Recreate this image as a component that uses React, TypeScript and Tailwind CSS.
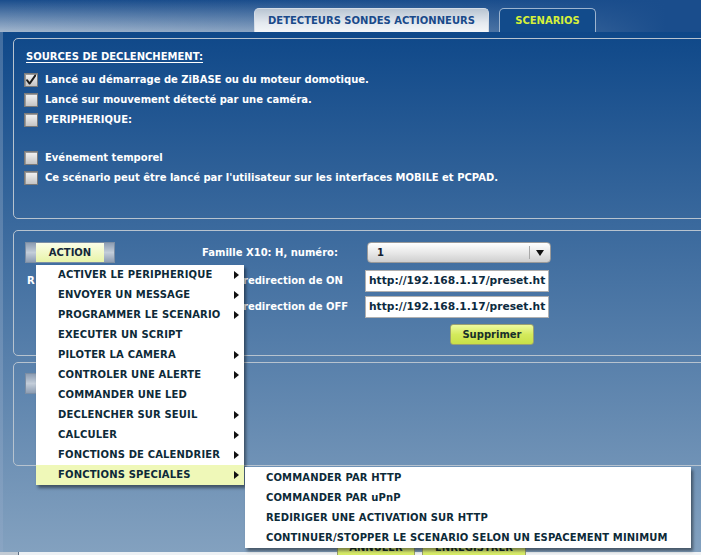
import React from 'react';

const font = "font-['DejaVu_Sans',Verdana,sans-serif] font-bold";

const Check: React.FC<{ checked?: boolean }> = ({ checked }) => (
  <span className="relative w-[14px] h-[14px] shrink-0 border border-[#7a7a7a] bg-[linear-gradient(to_bottom,#f4f4f4,#c4c4c4)] shadow-[inset_1px_1px_0_#9a9a9a]">
    {checked && (
      <svg viewBox="0 0 14 14" className="absolute -left-px -top-px w-[14px] h-[14px]">
        <path d="M3 7.2 L5.6 10.6 L11.2 2.6" fill="none" stroke="#1c1c1c" strokeWidth="1.9" strokeLinecap="round" strokeLinejoin="round" />
      </svg>
    )}
  </span>
);

const CheckRow: React.FC<{ label: string; checked?: boolean; className?: string }> = ({ label, checked, className }) => (
  <div className={`flex items-center h-[20px] gap-[7px] ${className ?? ''}`}>
    <Check checked={checked} />
    <span className="text-white">{label}</span>
  </div>
);

const ActionButton: React.FC<{ label: string }> = ({ label }) => (
  <div className="flex w-[90px] h-[21px] border border-[#7c8ea4]">
    <span className="w-[10px] bg-[linear-gradient(to_bottom,#8d9db3,#c3cdd9,#8d9db3)]" />
    <span className="flex-1 flex items-center justify-center bg-[linear-gradient(to_bottom,#fbfde8,#e8f4a8)] text-[#14283a]">{label}</span>
    <span className="w-[10px] bg-[linear-gradient(to_bottom,#8d9db3,#c3cdd9,#8d9db3)]" />
  </div>
);

const Arrow = () => (
  <svg viewBox="0 0 5 8" className="w-[5px] h-[8px]">
    <path d="M0 0 L5 4 L0 8 Z" fill="#111" />
  </svg>
);

const menuItems: { label: string; sub?: boolean }[] = [
  { label: 'ACTIVER LE PERIPHERIQUE', sub: true },
  { label: 'ENVOYER UN MESSAGE', sub: true },
  { label: 'PROGRAMMER LE SCENARIO', sub: true },
  { label: 'EXECUTER UN SCRIPT' },
  { label: 'PILOTER LA CAMERA', sub: true },
  { label: 'CONTROLER UNE ALERTE', sub: true },
  { label: 'COMMANDER UNE LED' },
  { label: 'DECLENCHER SUR SEUIL', sub: true },
  { label: 'CALCULER', sub: true },
  { label: 'FONCTIONS DE CALENDRIER', sub: true },
  { label: 'FONCTIONS SPECIALES', sub: true },
];

const subItems = [
  'COMMANDER PAR HTTP',
  'COMMANDER PAR uPnP',
  'REDIRIGER UNE ACTIVATION SUR HTTP',
  'CONTINUER/STOPPER LE SCENARIO SELON UN ESPACEMENT MINIMUM',
];

export default function App() {
  return (
    <div className={`relative w-[701px] h-[555px] overflow-hidden text-[10px] leading-none ${font} bg-[linear-gradient(to_bottom,#3d6a9e,#8aa5c3)]`}>
      {/* header with tabs */}
      <div className="h-[32px] flex items-end pl-[254px] gap-[10px] bg-[linear-gradient(to_right,rgba(26,77,140,0)_0%,rgba(26,77,140,0.2)_40%,#1a4d8c_95%),linear-gradient(to_bottom,#1a4d8c,#a3b7ce)]">
        <div className="w-[235px] h-[24px] rounded-t-[5px] border border-b-0 border-[#d4dce6] bg-[linear-gradient(to_bottom,#b9c5d2,#e4e9ef_60%,#f4f6f8)] flex items-center justify-center text-[#1a4a8a]">
          DETECTEURS SONDES ACTIONNEURS
        </div>
        <div className="w-[97px] h-[24px] rounded-t-[5px] border border-b-0 border-[#9db4cf] bg-[#124b8b] flex items-center justify-center text-[#d6f03a]">
          SCENARIOS
        </div>
      </div>

      {/* main area */}
      <div className="ml-[3px] h-[520px] pt-[6px] pl-[10px] bg-[linear-gradient(to_bottom,#0f4889,#83a1bf)]">
        {/* sources */}
        <div className="w-[720px] h-[181px] border border-[#b7c3cf] rounded-[5px] pt-[8px] pl-[10px]">
          <div className="h-[20px] flex items-center pl-[2px]">
            <span className="text-white underline underline-offset-2">SOURCES DE DECLENCHEMENT:</span>
          </div>
          <CheckRow className="mt-[3px]" checked label="Lancé au démarrage de ZiBASE ou du moteur domotique." />
          <CheckRow label="Lancé sur mouvement détecté par une caméra." />
          <CheckRow label="PERIPHERIQUE:" />
          <CheckRow className="mt-[18px]" label="Evénement temporel" />
          <CheckRow label="Ce scénario peut être lancé par l'utilisateur sur les interfaces MOBILE et PCPAD." />
        </div>

        {/* action */}
        <div className="w-[720px] mt-[11px] border border-[#b7c3cf] rounded-[5px] pt-[11px] pb-[10px] pl-[11px] text-white">
          <div className="flex items-center h-[21px]">
            <ActionButton label="ACTION" />
            <span className="ml-[87px] w-[165px]">Famille X10: H, numéro:</span>
            <div className="w-[184px] h-[21px] rounded-[4px] border border-[#9a9a9a] bg-[linear-gradient(to_bottom,#ffffff,#e6e6e6_55%,#cfcfcf)] flex items-center text-[#102030]">
              <span className="flex-1 pl-[9px]">1</span>
              <span className="w-px h-[13px] bg-[#a8a8a8]" />
              <span className="w-[20px] flex justify-center">
                <svg viewBox="0 0 8 6" className="w-[8px] h-[6px]"><path d="M0 0 H8 L4 6 Z" fill="#111" /></svg>
              </span>
            </div>
          </div>
          <div className="flex items-center h-[22px] mt-[7px]">
            <span className="w-[218px] pl-[2px]">R</span>
            <span className="w-[122px]">redirection de ON</span>
            <div className="w-[184px] h-[22px] bg-white border border-[#b0b0b0] flex items-center pl-[3px] text-[10.7px] text-[#0c2a40] whitespace-nowrap">http://192.168.1.17/preset.ht</div>
          </div>
          <div className="flex items-center h-[22px] mt-[4px]">
            <span className="w-[218px]" />
            <span className="w-[122px]">redirection de OFF</span>
            <div className="w-[184px] h-[22px] bg-white border border-[#b0b0b0] flex items-center pl-[3px] text-[10.7px] text-[#0c2a40] whitespace-nowrap">http://192.168.1.17/preset.ht</div>
          </div>
          <div className="h-[21px] mt-[6px] pl-[425px]">
            <button className="w-[84px] h-[21px] rounded-[3px] border border-[#9aa070] bg-[linear-gradient(to_bottom,#eefaa0,#d4ea5c_50%,#c8e048)] text-[#18302a]">Supprimer</button>
          </div>
        </div>

        {/* second action */}
        <div className="w-[720px] h-[104px] mt-[6px] border border-[#b7c3cf] rounded-[5px] pt-[10px] pl-[11px]">
          <ActionButton label="ACTION" />
        </div>

        {/* bottom buttons */}
        <div className="relative z-10 flex h-[20px] mt-[72px] pl-[324px] gap-[7px] text-[#18302a]">
          <div className="w-[78px] h-[20px] border border-[#9aa070] bg-[linear-gradient(to_bottom,#eefaa0,#d4ea5c)] flex items-center justify-center">ANNULER</div>
          <div className="w-[104px] h-[20px] border border-[#9aa070] bg-[linear-gradient(to_bottom,#eefaa0,#d4ea5c)] flex items-center justify-center">ENREGISTRER</div>
        </div>
      </div>

      {/* footer strip */}
      <div className="flex h-[3px]">
        <span className="w-[18px] bg-[#c3cbd4]" />
        <span className="flex-1 border-l border-[#5d6f84] bg-[#eef1f4]" />
      </div>

      {/* dropdown menu */}
      <div className="absolute left-[36px] top-[265px] w-[208px] bg-white shadow-[2px_3px_3px_rgba(0,0,0,0.45)] text-[#0d2a38] tracking-[0.15px]">
        {menuItems.map((item, i) => (
          <div key={item.label} className={`h-[20px] flex items-center pl-[22px] pr-[5px] ${i === menuItems.length - 1 ? 'bg-[#eff8b8]' : ''}`}>
            <span className="flex-1">{item.label}</span>
            {item.sub && <Arrow />}
          </div>
        ))}
      </div>

      {/* submenu */}
      <div className="absolute z-20 left-[245px] top-[467px] w-[446px] pt-[1px] bg-white shadow-[2px_3px_3px_rgba(0,0,0,0.45)] text-[#0d2a38] tracking-[0.13px]">
        {subItems.map(s => (
          <div key={s} className="h-[20px] flex items-center pl-[21px]">{s}</div>
        ))}
      </div>
    </div>
  );
}
